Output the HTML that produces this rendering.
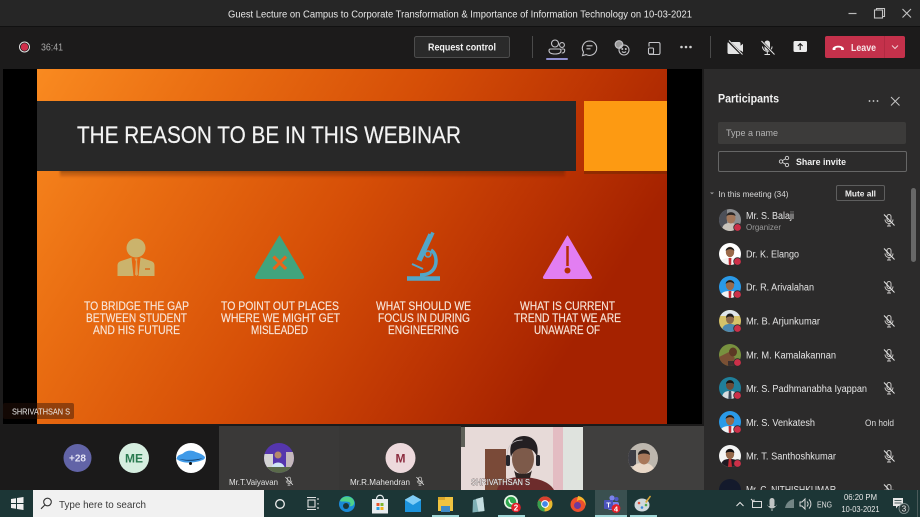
<!DOCTYPE html>
<html><head><meta charset="utf-8"><title>Teams meeting</title>
<style>
html,body{margin:0;padding:0;background:#1c1b1b;width:920px;height:517px;overflow:hidden}
svg{display:block;font-family:"Liberation Sans",sans-serif;filter:blur(.3px)}
</style></head><body>
<svg width="920" height="517" viewBox="0 0 920 517" xmlns="http://www.w3.org/2000/svg">
<defs>
<linearGradient id="sl" x1="0" y1="0" x2="1" y2="0.35"><stop offset="0" stop-color="#f98a20"/><stop offset=".25" stop-color="#ea6e12"/><stop offset=".55" stop-color="#d64f07"/><stop offset=".8" stop-color="#bd3503"/><stop offset="1" stop-color="#a52200"/></linearGradient>
<linearGradient id="shadow" x1="0" y1="0" x2="0" y2="1"><stop offset="0" stop-color="#4a1a00" stop-opacity=".75"/><stop offset="1" stop-color="#4a1a00" stop-opacity="0"/></linearGradient>
<filter id="b1"><feGaussianBlur stdDeviation="1"/></filter>
<symbol id="mic" viewBox="0 0 14 14"><g fill="none" stroke="#c8c6c4" stroke-width="1"><rect x="5" y="1.5" width="4" height="7" rx="2"/><path d="M3 6.5a4 4 0 0 0 8 0M7 10.5V13M5 13h4"/><path d="M2 1.5 12.5 12.5" stroke="#e8e8e8"/></g></symbol>
<clipPath id="c11"><circle r="11"/></clipPath>
<clipPath id="c15"><circle r="15"/></clipPath>
<clipPath id="vid"><rect x="461" y="427" width="122" height="63"/></clipPath>
<g id="man" clip-path="url(#c11)"><path d="M-11 12C-10 5-5 4 0 4s10 1 11 8z" fill="#f2f2f2"/><path d="M-1.4 4h2.8L1.2 11h-2.4z" fill="#c22a33"/><ellipse cx="0" cy="-2" rx="4.2" ry="5.2" fill="#9a6a4a"/><path d="M-4.3-3C-4.5-8 4.5-8 4.3-3 2-5.5-2-5.5-4.3-3z" fill="#1b1b1b"/></g>
<g id="badge"><circle cx="7.5" cy="7.5" r="4.2" fill="#2b2b2b"/><circle cx="7.5" cy="7.5" r="3.4" fill="#cc3049"/></g>
</defs>

<rect width="920" height="517" fill="#1c1b1b"/>
<!-- title bar -->
<rect width="920" height="26" fill="#262626"/>
<rect y="26" width="920" height="1" fill="#111"/>
<text x="228" y="17.5" font-size="10.5" fill="#e8e8e8" textLength="464" lengthAdjust="spacingAndGlyphs">Guest Lecture on Campus to Corporate Transformation &amp; Importance of Information Technology on 10-03-2021</text>
<path d="M848.5 13.5h8" stroke="#bbb" stroke-width="1.2"/>
<g fill="none" stroke="#c4c4c4" stroke-width="1.1"><rect x="874.5" y="10" width="8" height="8"/><path d="M876.5 10V8.5h8v8h-2"/><path d="M902.5 9l8.500 8.500M911 9l-8.500 8.500"/></g>

<!-- toolbar -->
<circle cx="24.5" cy="47" r="5" fill="none" stroke="#e4e4e4" stroke-width="1"/><circle cx="24.5" cy="47" r="3.700" fill="#d1304c"/>
<text x="41" y="50.5" font-size="10" fill="#a8a8a8" textLength="22" lengthAdjust="spacingAndGlyphs">36:41</text>
<rect x="414.5" y="36.5" width="95" height="21" rx="2" fill="#2a2a2a" stroke="#4d4d4d"/>
<text x="428" y="50.5" font-size="10.5" font-weight="700" fill="#f2f2f2" textLength="68" lengthAdjust="spacingAndGlyphs">Request control</text>
<path d="M532.5 36v22M710.5 36v22" stroke="#4a4a4a"/>
<g fill="none" stroke="#c4c4c8" stroke-width="1.1">
<circle cx="555" cy="43.5" r="3.500"/><circle cx="562" cy="45" r="2.400"/><path d="M550.5 49h9a1.5 1.5 0 0 1 1.5 1.5c0 2.500-2 3.500-6 3.500s-6-1-6-3.500a1.5 1.5 0 0 1 1.5-1.5zM561.5 49h2a1.200 1.200 0 0 1 1.200 1.200c0 1.800-1.200 2.800-3 2.800"/>
<path d="M589.5 41a7.200 7.200 0 1 1-3.300 13.600l-3.700 1 1-3.500a7.200 7.200 0 0 1 6-11.100z"/><path d="M586.5 45.800h6M586.5 48.800h4"/>
<circle cx="619" cy="44.5" r="3.800" fill="#9a9a9a"/><circle cx="624" cy="50" r="5"/><circle cx="622.3" cy="49" r=".5"/><circle cx="625.8" cy="49" r=".5"/><path d="M622 51.5c1 1.200 3 1.200 4 0"/>
<path d="M649 42.5h9.500a1.5 1.5 0 0 1 1.5 1.5v9a1.5 1.5 0 0 1-1.5 1.5h-9.500"/><path d="M649 42.5v4"/><rect x="648.5" y="48" width="5" height="6" rx="1"/>
</g>
<g fill="#d0d0d0"><circle cx="681.5" cy="47" r="1.300"/><circle cx="686" cy="47" r="1.300"/><circle cx="690.5" cy="47" r="1.300"/></g>
<rect x="546" y="58" width="22" height="2" rx="1" fill="#8f90cf"/>
<!-- cam, mic, share -->
<path d="M729 42h10a1.5 1.5 0 0 1 1.5 1.5v2.200l2.500-2v8.600l-2.500-2v2.200a1.5 1.5 0 0 1-1.500 1.500h-10a1.500 1.500 0 0 1-1.500-1.500v-9A1.500 1.500 0 0 1 729 42z" fill="#e4e4e4"/>
<path d="M728 40.5l14 14" stroke="#1c1b1b" stroke-width="2.5"/><path d="M729 40.5l13.500 14" stroke="#e4e4e4" stroke-width="1"/>
<g fill="#e0e0e0"><rect x="764.5" y="40.5" width="5.5" height="10" rx="2.700"/></g>
<path d="M762.5 46.5a4.800 4.800 0 0 0 9.600 0M767.3 51.5v3M764.5 54.5h5.500" fill="none" stroke="#e0e0e0" stroke-width="1"/>
<path d="M761 41l13.500 13.500" stroke="#1c1b1b" stroke-width="2.5"/><path d="M761.5 41l13 13.500" stroke="#e4e4e4"/>
<rect x="793.5" y="41" width="13.5" height="11" rx="1.500" fill="#ececec"/>
<path d="M800.2 50v-6M797.8 46l2.400-2.400 2.400 2.400" fill="none" stroke="#1c1b1b" stroke-width="1.100"/>
<!-- leave -->
<rect x="825" y="36" width="80" height="22" rx="2" fill="#c4314b"/><rect x="884" y="36" width="1" height="22" fill="#b22a42"/>
<path d="M832.5 49.5c-.5-5 12-5 11.500 0l-.4.500h-2.400l-.4-2c-1.600-.6-3.500-.6-5.100 0l-.4 2H833z" fill="#fff"/>
<text x="851" y="51" font-size="10" font-weight="700" fill="#f7e6e9" textLength="25" lengthAdjust="spacingAndGlyphs">Leave</text>
<path d="M892 45.5l3 3 3-3" fill="none" stroke="#f0d0d6" stroke-width="1"/>

<!-- stage -->
<rect x="3" y="69" width="699" height="355" fill="#000"/>
<rect x="37" y="69" width="630" height="355" fill="url(#sl)"/>
<rect x="60" y="166" width="505" height="12" fill="url(#shadow)" filter="url(#b1)"/>
<rect x="37" y="101" width="539" height="70" fill="#282828"/>
<rect x="584" y="101" width="83" height="70" fill="#fd9a12"/>
<rect x="584" y="171" width="83" height="3" fill="#7a2a00" opacity=".6"/>
<text x="77" y="143" font-size="24" fill="#f4f4f4" stroke="#f4f4f4" stroke-width=".2" textLength="384" lengthAdjust="spacingAndGlyphs">THE REASON TO BE IN THIS WEBINAR</text>

<!-- slide icons -->
<circle cx="136" cy="248" r="9.5" fill="#cbb36c"/>
<path d="M117.5 276v-10c0-3 1-4 3.500-5l10.500-3.500 2 18.500zM154.500 276v-10c0-3-1-4-3.500-5l-10.500-3.500-2 18.500z" fill="#cbb36c"/>
<path d="M134.5 258.5h3l-.4 3 .9 13-1.500 1.500-1.500-1.500.9-13z" fill="#d9a35a"/><path d="M145 269h5" stroke="#dd6010" stroke-width="1.3"/>
<path d="M279.5 236l24 40.500q.5 2-1.500 2h-45q-2 0-1.500-2z" fill="#41a47d" stroke="#41a47d" stroke-linejoin="round"/>
<path d="M273.500 256.500l12.500 12.500M286 256.500l-12.500 12.500" stroke="#e8651a" stroke-width="3.200"/>
<g fill="none" stroke="#52a6c8">
<path d="M431 234.500l-12 26" stroke-width="5.500"/>
<path d="M433 232.500l-1.500 3" stroke-width="3.500"/>
<path d="M431 250c6 4 7 15 1 21-3 3-8 4-12 4" stroke-width="3.500"/>
<path d="M412 264l11 5" stroke-width="2"/>
<path d="M407 278.500h33" stroke-width="4.500"/>
</g>
<circle cx="428" cy="254" r="3" fill="#d24c06" stroke="#52a6c8" stroke-width="1.5"/>
<path d="M567.5 236l24 41q.5 1.500-1.500 1.500h-45q-2 0-1.500-1.500z" fill="#e27ef2" stroke="#e27ef2" stroke-linejoin="round"/>
<path d="M567.5 246v20" stroke="#b52e05" stroke-width="2.5"/><circle cx="567.5" cy="270.5" r="3" fill="#b52e05"/>

<!-- slide text -->
<g font-size="12" fill="#f8e6da" stroke="#f8e6da" stroke-width=".15">
<text x="84" y="310" textLength="105" lengthAdjust="spacingAndGlyphs">TO BRIDGE THE GAP</text>
<text x="86" y="322" textLength="101" lengthAdjust="spacingAndGlyphs">BETWEEN STUDENT</text>
<text x="93" y="334" textLength="87" lengthAdjust="spacingAndGlyphs">AND HIS FUTURE</text>
<text x="221" y="310" textLength="118" lengthAdjust="spacingAndGlyphs">TO POINT OUT PLACES</text>
<text x="221" y="322" textLength="119" lengthAdjust="spacingAndGlyphs">WHERE WE MIGHT GET</text>
<text x="251" y="334" textLength="57" lengthAdjust="spacingAndGlyphs">MISLEADED</text>
<text x="376" y="310" textLength="95" lengthAdjust="spacingAndGlyphs">WHAT SHOULD WE</text>
<text x="378" y="322" textLength="92" lengthAdjust="spacingAndGlyphs">FOCUS IN DURING</text>
<text x="388" y="334" textLength="71" lengthAdjust="spacingAndGlyphs">ENGINEERING</text>
<text x="520" y="310" textLength="95" lengthAdjust="spacingAndGlyphs">WHAT IS CURRENT</text>
<text x="514" y="322" textLength="107" lengthAdjust="spacingAndGlyphs">TREND THAT WE ARE</text>
<text x="534" y="334" textLength="66" lengthAdjust="spacingAndGlyphs">UNAWARE OF</text>
</g>
<rect x="3" y="403" width="71" height="16" rx="2" fill="#2a1208" fill-opacity=".45"/>
<text x="12" y="414.5" font-size="8.5" fill="#efefef" textLength="58" lengthAdjust="spacingAndGlyphs">SHRIVATHSAN S</text>

<!-- bottom strip -->
<rect y="425" width="704" height="65" fill="#1b1a1a"/>
<rect x="219" y="426" width="120" height="64" fill="#3a3938"/>
<rect x="339" y="426" width="122" height="64" fill="#383736"/>
<rect x="583" y="426" width="121" height="64" fill="#403f3e"/>
<circle cx="77.5" cy="458" r="14" fill="#6264a7"/>
<text x="77.5" y="461.5" font-size="10" font-weight="700" fill="#e4e4f4" text-anchor="middle">+28</text>
<circle cx="134" cy="458" r="15" fill="#d6eee0"/>
<text x="134" y="462.5" font-size="12" font-weight="700" fill="#2a7a50" text-anchor="middle">ME</text>
<circle cx="191" cy="458" r="15" fill="#fff"/>
<path d="M176.500 459c1-5 5-4 7-6 3-3 9-3 12-1 3 1 7 2 9.500 5 0 3-3 3-5 4-7 2-17 3-23.500-2z" fill="#3f9ae8"/><path d="M179 459c8 1.500 17 1 24-1-6 3.500-18 3.500-24 1z" fill="#123a66"/><circle cx="190.500" cy="463.500" r="1.500" fill="#111"/>
<!-- Vaiyavan -->
<g transform="translate(279 458)" clip-path="url(#c15)"><rect x="-15" y="-15" width="30" height="30" fill="#5536ad"/><rect x="-15" y="-4" width="9" height="19" fill="#d4d4d4"/><rect x="7" y="-6" width="8" height="21" fill="#c4b8bc"/><circle cx="-1" cy="-3" r="3.500" fill="#b58a6a"/><path d="M-8 12c0-10 14-10 14 0z" fill="#cfe6f4"/><rect x="-15" y="9" width="30" height="6" fill="#5a6a4a"/></g>
<text x="229" y="485" font-size="8.5" fill="#e4e4e4" textLength="49" lengthAdjust="spacingAndGlyphs">Mr.T.Vaiyavan</text>
<use href="#mic" x="284" y="476" width="10" height="10"/>
<circle cx="400.5" cy="458" r="15" fill="#edd9dc"/>
<text x="400.5" y="462.5" font-size="12" font-weight="700" fill="#8c2c3f" text-anchor="middle">M</text>
<text x="350" y="485" font-size="8.5" fill="#e4e4e4" textLength="60" lengthAdjust="spacingAndGlyphs">Mr.R.Mahendran</text>
<use href="#mic" x="415" y="476" width="10" height="10"/>

<!-- video -->
<g clip-path="url(#vid)">
<rect x="461" y="427" width="122" height="63" fill="#e7dad8"/>
<rect x="461" y="427" width="4" height="20" fill="#5e6058"/>
<rect x="553" y="427" width="10" height="63" fill="#e3bcc2"/>
<rect x="563" y="427" width="20" height="63" fill="#dfe3de"/>
<rect x="485" y="449" width="21" height="41" fill="#7a4a38"/>
<path d="M497 490c2-10 14-13 24-13s28 3 33 13z" fill="#6d2c2c"/>
<ellipse cx="523" cy="459" rx="11" ry="15" fill="#7d5a4a"/>
<path d="M511 457c-3-14 4-21 13-21s16 7 13 21c-2-6-6-9-13-9s-11 3-13 9z" fill="#241f22"/>
<path d="M514 470c2 5 16 5 18 0l-2 8h-14z" fill="#2e2422"/>
<path d="M507.500 460v-6c0-9 6-14 15-14" fill="none" stroke="#c9c4c6" stroke-width=".7"/>
<rect x="506" y="455" width="4" height="11" rx="1.5" fill="#25252b"/><rect x="536" y="455" width="4" height="11" rx="1.5" fill="#25252b"/>
</g>
<text x="471" y="485" font-size="8.5" fill="#f4f4f4" stroke="#5f4f4e" stroke-width=".7" paint-order="stroke" textLength="59" lengthAdjust="spacingAndGlyphs">SHRIVATHSAN S</text>
<!-- last avatar -->
<g transform="translate(643 458)" clip-path="url(#c15)"><rect x="-15" y="-15" width="30" height="30" fill="#bdb7ae"/><rect x="-15" y="-8" width="8" height="16" fill="#3d3d44"/><path d="M-12 15c1-9 6-10 12-10s11 2 12 10z" fill="#e9d8c8"/><ellipse cx="1" cy="-1" rx="6" ry="7.5" fill="#a9785a"/><path d="M-5-3c0-7 12-7 12 0-3-2-9-2-12 0z" fill="#2a2422"/></g>

<!-- participants panel -->
<rect x="704" y="69" width="216" height="421" fill="#2c2b2b"/>
<text x="718" y="102.5" font-size="11.5" font-weight="700" fill="#f2f2f2" textLength="61" lengthAdjust="spacingAndGlyphs">Participants</text>
<g fill="#d0d0d0"><circle cx="869.5" cy="101" r=".9"/><circle cx="873.5" cy="101" r=".9"/><circle cx="877.5" cy="101" r=".9"/></g>
<path d="M891 97l8.500 8.500M899.500 97l-8.500 8.500" stroke="#c4c4c4" stroke-width="1"/>
<rect x="718" y="122" width="188" height="22" rx="2" fill="#3c3b3a"/>
<text x="726" y="136" font-size="9.5" fill="#b4b4b4" textLength="52" lengthAdjust="spacingAndGlyphs">Type a name</text>
<rect x="718.5" y="151.5" width="188" height="20" rx="1.5" fill="none" stroke="#666"/>
<g fill="none" stroke="#d4d4d4" stroke-width=".9"><circle cx="781" cy="161.5" r="1.700"/><circle cx="787" cy="158" r="1.700"/><circle cx="787" cy="165" r="1.700"/><path d="M782.5 160.5l3-1.700M782.5 162.5l3 1.700"/></g>
<text x="796" y="165" font-size="9.5" font-weight="700" fill="#efefef" textLength="50" lengthAdjust="spacingAndGlyphs">Share invite</text>
<path d="M710 192.5h4l-2 1.800z" fill="#a0a0a0"/>
<text x="718.5" y="197" font-size="8.5" fill="#d8d8d8" textLength="70" lengthAdjust="spacingAndGlyphs">In this meeting (34)</text>
<rect x="836.5" y="185.5" width="48" height="15" rx="1.5" fill="#2c2b2b" stroke="#5e5e5e"/>
<text x="845" y="196.5" font-size="8.5" font-weight="700" fill="#efefef" textLength="31" lengthAdjust="spacingAndGlyphs">Mute all</text>
<rect x="911" y="188" width="5" height="74" rx="2.5" fill="#686868"/>

<!-- rows -->
<g transform="translate(730 220)"><g clip-path="url(#c11)"><rect x="-11" y="-11" width="22" height="22" fill="#8d8f92"/><rect x="-11" y="-11" width="8" height="22" fill="#4c4f58"/><path d="M-8 11c0-7 4-8 8-8s8 1 8 8z" fill="#c9c3bb"/><ellipse cx="1" cy="-2" rx="4.5" ry="5.5" fill="#a3775a"/><path d="M-3.5-4c0-5 9-5 9 0-2-1.5-7-1.5-9 0z" fill="#2b2624"/></g><use href="#badge"/></g>
<text x="746" y="219" font-size="10" fill="#e4e4e4" textLength="48" lengthAdjust="spacingAndGlyphs">Mr. S. Balaji</text>
<text x="746" y="230" font-size="8" fill="#9a9a9a" textLength="35" lengthAdjust="spacingAndGlyphs">Organizer</text>
<use href="#mic" x="882" y="213" width="14" height="14"/>

<g transform="translate(730 254)"><circle r="11" fill="#fff"/><use href="#man"/><use href="#badge"/></g>
<text x="746" y="257.5" font-size="10" fill="#e4e4e4" textLength="53" lengthAdjust="spacingAndGlyphs">Dr. K. Elango</text>
<use href="#mic" x="882" y="247" width="14" height="14"/>

<g transform="translate(730 287)"><circle r="11" fill="#2a9ae8"/><use href="#man"/><use href="#badge"/></g>
<text x="746" y="290.5" font-size="10" fill="#e4e4e4" textLength="68" lengthAdjust="spacingAndGlyphs">Dr. R. Arivalahan</text>
<use href="#mic" x="882" y="280" width="14" height="14"/>

<g transform="translate(730 321)"><g clip-path="url(#c11)"><rect x="-11" y="-11" width="22" height="22" fill="#d6c26a"/><rect x="-11" y="-11" width="22" height="6" fill="#dfe6ea"/><path d="M-8 11c0-7 4-8 8-8s8 1 8 8z" fill="#4c88b0"/><ellipse cy="-2" rx="4" ry="5" fill="#8d6a4c"/><path d="M-4-3c0-6 8-6 8 0-2-2-6-2-8 0z" fill="#1e1c1a"/></g><use href="#badge"/></g>
<text x="746" y="324.5" font-size="10" fill="#e4e4e4" textLength="74" lengthAdjust="spacingAndGlyphs">Mr. B. Arjunkumar</text>
<use href="#mic" x="882" y="314" width="14" height="14"/>

<g transform="translate(730 355)"><g clip-path="url(#c11)"><rect x="-11" y="-11" width="22" height="22" fill="#78913f"/><path d="M-11 11V2l10-5 6 6-5 8z" fill="#7a5034"/><ellipse cx="3" cy="-3" rx="4" ry="4.5" fill="#5c3a24"/><rect x="-2" y="6" width="13" height="5" fill="#3a3030"/></g><use href="#badge"/></g>
<text x="746" y="358.5" font-size="10" fill="#e4e4e4" textLength="90" lengthAdjust="spacingAndGlyphs">Mr. M. Kamalakannan</text>
<use href="#mic" x="882" y="348" width="14" height="14"/>

<g transform="translate(730 388)"><g clip-path="url(#c11)"><rect x="-11" y="-11" width="22" height="22" fill="#1f7f9a"/><path d="M-8 11c0-7 4-8 8-8s8 1 8 8z" fill="#d8dde0"/><path d="M-1.2 3h2.400l.5 8h-3.400z" fill="#3a4a5a"/><ellipse cy="-3" rx="4" ry="5" fill="#6e4a34"/><path d="M-4-4c0-5 8-5 8 0-2-1.5-6-1.5-8 0z" fill="#161413"/></g><use href="#badge"/></g>
<text x="746" y="392" font-size="10" fill="#e4e4e4" textLength="121" lengthAdjust="spacingAndGlyphs">Mr. S. Padhmanabha Iyappan</text>
<use href="#mic" x="882" y="381" width="14" height="14"/>

<g transform="translate(730 422)"><circle r="11" fill="#2a9ae8"/><use href="#man"/><use href="#badge"/></g>
<text x="746" y="426" font-size="10" fill="#e4e4e4" textLength="69" lengthAdjust="spacingAndGlyphs">Mr. S. Venkatesh</text>
<text x="865" y="426" font-size="9" fill="#dcdcdc" textLength="29" lengthAdjust="spacingAndGlyphs">On hold</text>

<g transform="translate(730 456)"><circle r="11" fill="#f4f4f4"/><g clip-path="url(#c11)"><path d="M-9 11c0-7 4-8 9-8s9 1 9 8z" fill="#1e1a22"/><path d="M-1.2 3h2.400l.8 8h-4z" fill="#c22a33"/><ellipse cy="-2" rx="4.2" ry="5.2" fill="#94684a"/><path d="M-4.3-3c0-5.500 8.600-5.500 8.600 0-2-1.500-6.600-1.500-8.600 0z" fill="#121012"/></g><use href="#badge"/></g>
<text x="746" y="459.5" font-size="10" fill="#e4e4e4" textLength="90" lengthAdjust="spacingAndGlyphs">Mr. T. Santhoshkumar</text>
<use href="#mic" x="882" y="449" width="14" height="14"/>

<circle cx="730" cy="490" r="11" fill="#141a2c"/>
<text x="746" y="493" font-size="10" fill="#e4e4e4" textLength="90" lengthAdjust="spacingAndGlyphs">Mr. C. NITHISHKUMAR</text>
<use href="#mic" x="882" y="483" width="14" height="14"/>

<!-- taskbar -->
<rect y="490" width="920" height="27" fill="#1c3636"/>
<g fill="#f0f0f0"><path d="M11 499l5-.8v4.800h-5zM17 498l6.500-1v6h-6.500zM11 504h5v4.800l-5-.8zM17 504h6.500v6l-6.500-1z"/></g>
<rect x="33" y="490" width="231" height="27" fill="#f1f1f1"/>
<g fill="none" stroke="#333" stroke-width="1.100"><circle cx="47.5" cy="502" r="3.800"/><path d="M44.8 505l-3.800 3.800"/></g>
<text x="59" y="508" font-size="10.5" fill="#3a3a3a" textLength="87" lengthAdjust="spacingAndGlyphs">Type here to search</text>
<circle cx="280" cy="504" r="4.300" fill="none" stroke="#f0f0f0" stroke-width="1.300"/>
<g fill="none" stroke="#e0e0e0" stroke-width="1.100"><rect x="308" y="500" width="7" height="7"/><path d="M307 497.5h9M307 509.5h9M318 498v2M318 503v1.500M318 507v2"/></g>
<!-- edge -->
<circle cx="347" cy="504" r="8" fill="#1b8ad6"/><path d="M340 501c2-6 12-6 14 0 1 4-2 6-5 5 2-1 2-3 0-4-4-1-8 0-9-1z" fill="#4fd28a"/><circle cx="346" cy="506" r="3" fill="#1c3636"/>
<!-- store -->
<path d="M372 499h16v14.500h-16z" fill="#e8ecef"/><path d="M376.500 499c0-5 7-5 7 0" fill="none" stroke="#e8ecef" stroke-width="1.200"/>
<rect x="376.5" y="503" width="3" height="3" fill="#e8532b"/><rect x="380.5" y="503" width="3" height="3" fill="#7db52c"/><rect x="376.5" y="507" width="3" height="3" fill="#29a0e4"/><rect x="380.5" y="507" width="3" height="3" fill="#f3b21b"/>
<!-- mail -->
<path d="M405 500l8-4.500 8 4.500v12h-16z" fill="#1c93dc"/><path d="M405 500l8 5 8-5v-.5l-8-4.500-8 4.500z" fill="#7fcdf7"/>
<!-- explorer -->
<rect x="438" y="497" width="15" height="14" fill="#f0c441"/><rect x="438" y="497" width="7" height="3" fill="#d9a72a"/><rect x="441" y="506" width="9" height="6" fill="#3e8bc8"/>
<!-- notes -->
<path d="M473 500l10-3 1.500 14-12 1.500z" fill="#7fb0b5"/><path d="M476 499l7-2 1.500 14-6 .8z" fill="#c4dde0"/>
<!-- whatsapp -->
<circle cx="511" cy="502" r="7" fill="#e6f4e6"/><circle cx="511" cy="502" r="5.300" fill="#2fa84f"/><path d="M509 499.500c0 3 1.500 4.500 4.500 4.800" stroke="#fff" stroke-width="1.400" fill="none"/>
<circle cx="516" cy="507.5" r="4.800" fill="#e3202a"/><text x="516" y="510.5" font-size="8" font-weight="700" fill="#fff" text-anchor="middle">2</text>
<!-- chrome -->
<circle cx="545" cy="504" r="7.5" fill="#e8b92f"/><path d="M545 504l-6.500-3.700a7.500 7.500 0 0 1 13 0z" fill="#d9402f"/><path d="M545 504l-6.500-3.700a7.500 7.500 0 0 0 6 11.200z" fill="#36a04f"/><circle cx="545" cy="504" r="3.400" fill="#4286e8" stroke="#fff" stroke-width="1"/>
<!-- firefox -->
<circle cx="578" cy="504.5" r="7.5" fill="#ec4f2d"/><path d="M578 496c6 1 8.500 6 7.500 10-.5-4-3-6-5-6-2.500 0-4 1-4 2.500z" fill="#f7b32b"/><circle cx="577.5" cy="505.5" r="3.500" fill="#6b3a9e"/>
<!-- teams -->
<rect x="595" y="490" width="32" height="27" fill="#3a5050"/>
<circle cx="612" cy="498" r="2.600" fill="#7b83eb"/><circle cx="616.5" cy="499" r="2" fill="#5059c9"/><rect x="608" y="502" width="11" height="8" rx="2" fill="#7b83eb"/><rect x="604" y="500" width="9" height="9" rx="1" fill="#4b53bc"/><text x="608.5" y="507.5" font-size="7" font-weight="700" fill="#fff" text-anchor="middle">T</text>
<circle cx="616" cy="508.5" r="4.400" fill="#e3202a"/><text x="616" y="511.5" font-size="7.5" font-weight="700" fill="#fff" text-anchor="middle">4</text>
<!-- paint -->
<ellipse cx="642" cy="505" rx="7.5" ry="6.5" fill="#cfd8dc"/><circle cx="639" cy="503" r="1.300" fill="#e0503a"/><circle cx="642" cy="507.5" r="1.300" fill="#3a86d8"/><circle cx="646" cy="505" r="1.300" fill="#4ea84f"/><path d="M645 502l5-6.500 1 1-4.500 6.500z" fill="#d9a93a"/>
<!-- underlines -->
<g fill="#9fd6d6"><rect x="432" y="515" width="27" height="2"/><rect x="498" y="515" width="27" height="2"/><rect x="595" y="515" width="32" height="2"/><rect x="630" y="515" width="27" height="2"/></g>
<!-- tray -->
<path d="M736.5 506l3.500-3.500 3.500 3.500" fill="none" stroke="#e8e8e8" stroke-width="1"/>
<g fill="none" stroke="#d8d8d8" stroke-width="1"><rect x="752.5" y="501.5" width="9" height="6"/><path d="M751 499l3 3M754 499.500v2"/></g>
<rect x="769.5" y="498" width="5" height="9" rx="2.500" fill="#c0c4c4"/><path d="M767.5 504a4.500 4.500 0 0 0 9 0v2h-9zM771.500 508h1v3h-1z" fill="#c0c4c4"/>
<path d="M785 508c1-5 4-8 9-9v9z" fill="#8a9a9a" opacity=".8"/>
<g fill="none" stroke="#d8d8d8" stroke-width="1"><path d="M800 502h2l3-3v10l-3-3h-2zM807 501.500c1.500 1.500 1.500 3.500 0 5M809 499.500c2.500 2.500 2.500 6.500 0 9"/></g>
<text x="817" y="507.5" font-size="8.5" fill="#e4e4e4" textLength="15" lengthAdjust="spacingAndGlyphs">ENG</text>
<text x="844" y="500" font-size="8.5" fill="#e8e8e8" textLength="33" lengthAdjust="spacingAndGlyphs">06:20 PM</text>
<text x="841.5" y="512" font-size="8.5" fill="#e8e8e8" textLength="38" lengthAdjust="spacingAndGlyphs">10-03-2021</text>
<path d="M893 498h10v8h-5l-2 2.500V506h-3z" fill="#e8e8e8"/><path d="M894.500 500.500h7M894.500 503h7" stroke="#1c3636" stroke-width=".8"/>
<circle cx="904" cy="508.5" r="5" fill="#2a3a3a" stroke="#8a9a9a" stroke-width=".8"/>
<text x="904" y="511.5" font-size="8" fill="#f0f0f0" text-anchor="middle">3</text>
<rect x="917" y="490" width="1" height="27" fill="#4a5a5a"/>
</svg>
</body></html>
